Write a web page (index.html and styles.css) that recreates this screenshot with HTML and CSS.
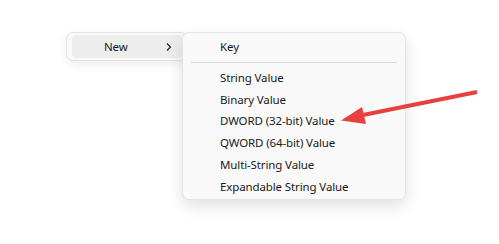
FILE: index.html
```html
<!DOCTYPE html>
<html>
<head>
<meta charset="utf-8">
<link rel="stylesheet" href="styles.css">
</head>
<body>
<div class="stage">
  <div class="menu main-menu">
    <div class="item hover">
      <span class="label">New</span>
      <svg class="chev" width="8" height="10" viewBox="0 0 8 10"><path d="M2 1.5 L5.5 5 L2 8.5" fill="none" stroke="#1a1a1a" stroke-width="1.1"/></svg>
    </div>
  </div>
  <div class="menu sub-menu">
    <div class="item">Key</div>
    <div class="sep"></div>
    <div class="item">String Value</div>
    <div class="item">Binary Value</div>
    <div class="item">DWORD (32-bit) Value</div>
    <div class="item">QWORD (64-bit) Value</div>
    <div class="item">Multi-String Value</div>
    <div class="item">Expandable String Value</div>
  </div>
  <svg class="arrow" width="499" height="244" viewBox="0 0 499 244">
    <line x1="477" y1="92" x2="358" y2="116" stroke="#e8403f" stroke-width="4" stroke-linecap="butt"/>
    <polygon points="341,120.5 362,107 366,124" fill="#e8403f"/>
  </svg>
</div>
</body>
</html>
```
FILE: styles.css
```css
html, body {
  margin: 0;
  padding: 0;
  background: #ffffff;
}
.stage {
  position: relative;
  width: 499px;
  height: 244px;
  display: flex;
  align-items: flex-start;
  padding: 32px 0 0 66px;
  box-sizing: border-box;
  font-family: "Noto Sans", "Open Sans", sans-serif;
  font-size: 11.5px;
  letter-spacing: -0.12px;
  color: #1a1a1a;
}
.menu {
  background: #f9f9f9;
  border: 1px solid #e3e3e3;
  border-radius: 7px;
  box-sizing: border-box;
}
.main-menu {
  width: 122px;
  padding: 2px 5px;
  box-shadow: 0 3px 10px rgba(0,0,0,0.08);
}
.main-menu .item {
  height: 23px;
  display: flex;
  align-items: center;
  padding-left: 32px;
  padding-right: 9px;
  border-radius: 4px;
}
.main-menu .item.hover {
  background: #ededed;
}
.main-menu .label {
  flex: 1;
}
.chev {
  display: block;
}
.sub-menu {
  width: 224px;
  margin-left: -6px;
  padding: 3px 8px 1px 8px;
  position: relative;
  z-index: 1;
  box-shadow: 0 6px 16px rgba(0,0,0,0.12);
}
.sub-menu .item {
  height: 21.8px;
  line-height: 21.8px;
  padding-left: 29px;
  white-space: nowrap;
}
.sep {
  height: 1px;
  background: #d9d9d9;
  margin: 4px 0 4px 0;
}
.arrow {
  position: absolute;
  left: 0;
  top: 0;
  z-index: 2;
  pointer-events: none;
}
```
